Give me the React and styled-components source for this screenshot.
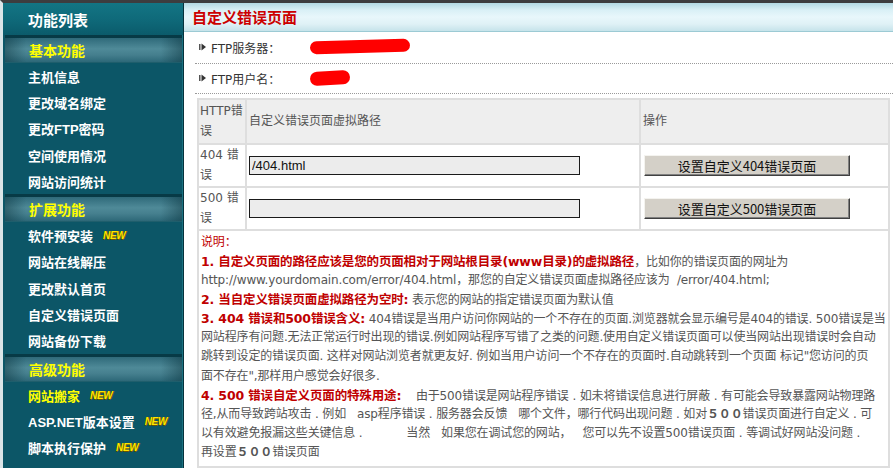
import React from "react";
import styled, { createGlobalStyle } from "styled-components";

const GlobalStyle = createGlobalStyle`
  html, body { margin: 0; padding: 0; background: #ffffff; }
  body { font-family: "DejaVu Sans", "Noto Sans CJK SC", sans-serif; font-size: 12px; }
  * { box-sizing: border-box; }
`;

const Page = styled.div`
  display: flex;
  height: 468px;
  overflow: hidden;
  border-top: 3px solid #3d3d3f;
  border-left: 3px solid #dbe5e8;
`;

const Sidebar = styled.nav`
  width: 181px;
  flex: none;
  background: #0c5667;
  border-right: 1px solid #06323c;
  box-shadow: inset -1px 0 0 #1a7180;
  display: flex;
  flex-direction: column;
  font-family: "Liberation Sans", "Noto Sans CJK SC", sans-serif;
`;

const SideTitle = styled.div`
  height: 32px;
  display: flex;
  align-items: center;
  padding-left: 25px;
  color: #ffffff;
  font-weight: bold;
  font-size: 15px;
  background: linear-gradient(to bottom, #137584 0%, #0f6a7a 50%, #0b5b6b 100%);
`;

const SectionHead = styled.div`
  height: 28px;
  margin-left: 2px;
  margin-right: 1px;
  border-top: 3px solid #073a46;
  border-bottom: 1px solid #1f5e6c;
  display: flex;
  align-items: center;
  padding-left: 24px;
  color: #ffff00;
  font-weight: bold;
  font-size: 14px;
  background:
    linear-gradient(to right, rgba(10,50,60,0.45) 0%, rgba(10,50,60,0) 12%, rgba(10,50,60,0) 88%, rgba(10,50,60,0.45) 100%),
    linear-gradient(to bottom, #2f6a7a 0%, #4f8a98 45%, #457f8e 70%, #2d6878 100%);
`;

const Item = styled.div`
  height: 26.3px;
  display: flex;
  align-items: center;
  padding-left: 25px;
  color: ${p => (p.$active ? "#ffff00" : "#ffffff")};
  font-weight: bold;
  font-size: 13px;
  white-space: nowrap;
`;

const NewBadge = styled.span`
  margin-left: 10px;
  font-family: "Liberation Sans", sans-serif;
  font-size: 10px;
  font-weight: bold;
  font-style: italic;
  color: #ffe600;
  letter-spacing: -0.3px;
  text-shadow: 1px 0 0 #6a5200, 0 1px 0 #6a5200;
`;

const Main = styled.main`
  flex: 1;
  display: flex;
  flex-direction: column;
  min-width: 0;
`;

const TitleBar = styled.div`
  height: 32px;
  display: flex;
  align-items: center;
  padding-left: 8px;
  border-bottom: 1px solid #9ccad4;
  background: linear-gradient(to bottom, #b2d9e3 0%, #d9f0f6 25%, #e8f7fb 50%, #dff1f6 75%, #c6e3ea 100%);
  color: #cc0000;
  font-weight: bold;
  font-size: 15px;
  font-family: "Noto Sans CJK SC", sans-serif;
`;

const Content = styled.div`
  padding-left: 11px;
  display: flex;
  flex-direction: column;
`;

const FtpRow = styled.div`
  height: ${p => p.$h}px;
  display: flex;
  align-items: center;
  padding-left: 4px;
  border-bottom: 1px dotted #9a9a9a;
  color: #333333;
  font-size: 12px;
`;

const FtpLabel = styled.span`
  width: 98px;
  margin-left: 4px;
  flex: none;
`;

const Table = styled.table`
  margin: 4px 3px 0 2px;
  border-collapse: collapse;
  width: 693px;
  table-layout: fixed;
  border: 2px solid #dedede;
  color: #555555;
  font-size: 12px;
`;

const Row = styled.tr`
  height: ${p => p.$h}px;
  background: ${p => (p.$head ? "#eeeeee" : "#ffffff")};
`;

const Cell = styled.td`
  border: 2px solid #dedede;
  padding: 0 ${p => (p.$narrow ? 0 : 2)}px 0 ${p => (p.$narrow ? 1 : 2)}px;
  line-height: 20.5px;
  vertical-align: middle;
  text-align: left;
  word-break: break-all;
`;

const TextInput = styled.input`
  width: 331px;
  height: 19px;
  margin: 0;
  padding: 0 2px;
  background: #ececec;
  border: 1px solid #1a1a1a;
  font-family: "Liberation Sans", sans-serif;
  font-size: 13px;
  color: #111;
  display: block;
`;

const SetButton = styled.button`
  width: 206px;
  height: 21px;
  margin: 0 0 0 1px;
  padding: 0;
  background: #d4d0c8;
  border: 1px solid;
  border-color: #f4f3ef #404040 #404040 #f4f3ef;
  box-shadow: inset -1px -1px 0 #808080;
  font-family: "Noto Sans CJK SC", sans-serif;
  font-size: 13px;
  color: #111;
  display: block;
`;

const DescCell = styled.td`
  border: 2px solid #dedede;
  padding: 2px 2px 4px 2px;
  vertical-align: top;
  line-height: 19.1px;
  color: #555555;
  font-size: 12px;
  letter-spacing: -0.15px;
`;

const Line = styled.div`
  white-space: nowrap;
  height: 19.1px;
`;

const Red = styled.span`
  color: #c00000;
  font-weight: ${p => (p.$bold ? "bold" : "normal")};
  font-size: ${p => (p.$bold ? "12.5px" : "12px")};
`;

const Arrow = () => (
  <svg width="8" height="8" viewBox="0 0 8 8" style={{ flex: "none" }}>
    <rect x="0" y="1" width="1.5" height="6" fill="#555" />
    <path d="M2.5 0.5 L7 4 L2.5 7.5 Z" fill="#333" />
  </svg>
);

const Scribble = ({ w, h, children }) => (
  <svg width={w} height={h} viewBox={`0 0 ${w} ${h}`} style={{ flex: "none" }}>
    {children}
  </svg>
);

export default function App() {
  return (
    <>
      <GlobalStyle />
      <Page>
        <Sidebar>
          <SideTitle>功能列表</SideTitle>
          <SectionHead>基本功能</SectionHead>
          <Item>主机信息</Item>
          <Item>更改域名绑定</Item>
          <Item>更改FTP密码</Item>
          <Item>空间使用情况</Item>
          <Item>网站访问统计</Item>
          <SectionHead>扩展功能</SectionHead>
          <Item>软件预安装<NewBadge>NEW</NewBadge></Item>
          <Item>网站在线解压</Item>
          <Item>更改默认首页</Item>
          <Item>自定义错误页面</Item>
          <Item>网站备份下载</Item>
          <SectionHead>高级功能</SectionHead>
          <Item $active>网站搬家<NewBadge>NEW</NewBadge></Item>
          <Item>ASP.NET版本设置<NewBadge>NEW</NewBadge></Item>
          <Item>脚本执行保护<NewBadge>NEW</NewBadge></Item>
        </Sidebar>
        <Main>
          <TitleBar>自定义错误页面</TitleBar>
          <Content>
            <FtpRow $h={32}>
              <Arrow />
              <FtpLabel>FTP服务器：</FtpLabel>
              <Scribble w={102} h={18}>
                <rect x="1" y="2" width="100" height="13" rx="6.5" fill="#ff0000" transform="rotate(-1.5 51 9)" />
              </Scribble>
            </FtpRow>
            <FtpRow $h={30}>
              <Arrow />
              <FtpLabel>FTP用户名：</FtpLabel>
              <Scribble w={42} h={18}>
                <rect x="1" y="2" width="40" height="14" rx="7" fill="#ff0000" transform="rotate(-3 21 9)" />
              </Scribble>
            </FtpRow>
            <Table>
              <colgroup>
                <col style={{ width: 48 }} />
                <col style={{ width: 394 }} />
                <col />
              </colgroup>
              <tbody>
                <Row $head $h={45}>
                  <Cell $narrow>HTTP错误</Cell>
                  <Cell>自定义错误页面虚拟路径</Cell>
                  <Cell>操作</Cell>
                </Row>
                <Row $h={41}>
                  <Cell $narrow>404 错误</Cell>
                  <Cell><TextInput defaultValue="/404.html" /></Cell>
                  <Cell><SetButton>设置自定义404错误页面</SetButton></Cell>
                </Row>
                <Row $h={42}>
                  <Cell $narrow>500 错误</Cell>
                  <Cell><TextInput defaultValue="" /></Cell>
                  <Cell><SetButton>设置自定义500错误页面</SetButton></Cell>
                </Row>
                <tr>
                  <DescCell colSpan={3}>
                    <Line><Red>说明：</Red></Line>
                    <Line><Red $bold>1. 自定义页面的路径应该是您的页面相对于网站根目录(www目录)的虚拟路径</Red>，比如你的错误页面的网址为</Line>
                    <Line>http://www.yourdomain.com/error/404.html，那您的自定义错误页面虚拟路径应该为 &nbsp;/error/404.html;</Line>
                    <Line><Red $bold>2. 当自定义错误页面虚拟路径为空时:</Red> 表示您的网站的指定错误页面为默认值</Line>
                    <Line><Red $bold>3. 404 错误和500错误含义:</Red> 404错误是当用户访问你网站的一个不存在的页面.浏览器就会显示编号是404的错误. 500错误是当</Line>
                    <Line>网站程序有问题.无法正常运行时出现的错误.例如网站程序写错了之类的问题.使用自定义错误页面可以使当网站出现错误时会自动</Line>
                    <Line>跳转到设定的错误页面. 这样对网站浏览者就更友好. 例如当用户访问一个不存在的页面时.自动跳转到一个页面 标记"您访问的页</Line>
                    <Line>面不存在",那样用户感觉会好很多.</Line>
                    <Line><Red $bold>4. 500 错误自定义页面的特殊用途:</Red> &nbsp;&nbsp;&nbsp;由于500错误是网站程序错误 . 如未将错误信息进行屏蔽 . 有可能会导致暴露网站物理路</Line>
                    <Line>径,从而导致跨站攻击 . 例如 &nbsp;&nbsp;asp程序错误 . 服务器会反馈 &nbsp;&nbsp;哪个文件，哪行代码出现问题 . 如对<b>５００</b>错误页面进行自定义 . 可</Line>
                    <Line>以有效避免报漏这些关键信息 . &nbsp;&nbsp;&nbsp;&nbsp;&nbsp;&nbsp;&nbsp;&nbsp;&nbsp;&nbsp;&nbsp;当然 &nbsp;&nbsp;如果您在调试您的网站， &nbsp;&nbsp;您可以先不设置500错误页面 . 等调试好网站没问题 .</Line>
                    <Line>再设置<b>５００</b>错误页面</Line>
                  </DescCell>
                </tr>
              </tbody>
            </Table>
          </Content>
        </Main>
      </Page>
    </>
  );
}
